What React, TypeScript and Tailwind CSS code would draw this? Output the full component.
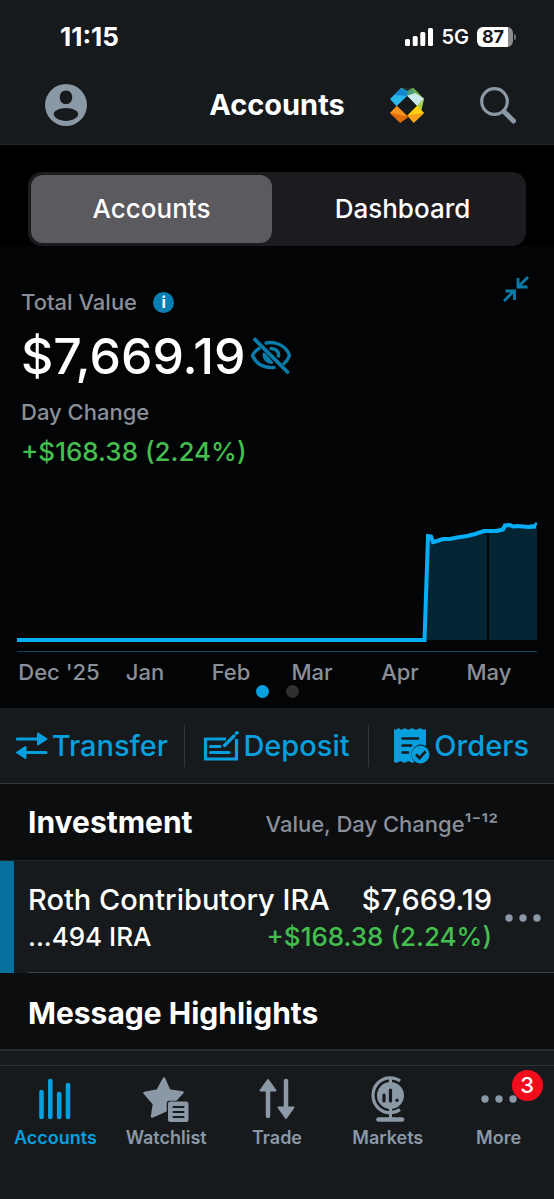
import { useState, type ReactNode } from "react";

const months = ["Dec '25", "Jan", "Feb", "Mar", "Apr", "May"];

function ProfileIcon() {
    return (
        <svg viewBox="0 0 42 42" className="size-[42px]" aria-hidden="true">
            <path
                fillRule="evenodd"
                fill="#8b98a6"
                d="M21 0a21 21 0 1 1 0 42a21 21 0 0 1 0-42zM21 6.500c-4 0-6.200 3-6.200 6.800s2.400 7 6.200 7s6.200-3.200 6.200-7s-2.200-6.800-6.200-6.800zM21 24c-6.600 0-12.300 3-12.300 6c0 3.300 5.700 7 12.300 7s12.300-3.700 12.300-7c0-3-5.700-6-12.300-6z"
            />
        </svg>
    );
}

function LogoIcon() {
    return (
        <svg viewBox="0 0 100 102" className="h-[35px] w-[34px]" aria-hidden="true">
            <path fill="#7db648" d="M30 0h40l30 31l-8 28l-14-8l-26-30z" />
            <path fill="#171a1d" d="M37 0h28l-14 9z" />
            <path fill="#2ab7ea" d="M0 32L32 0l24 20l-36 34z" />
            <path fill="#1489cf" d="M12 20L32 0l40 14l-20 9z" />
            <path fill="#4b9f73" d="M51 9l14-8l10 14l-23 8z" />
            <path fill="#c9e9ee" d="M50 22L74 14l26 17l-21 22z" />
            <path fill="#a3ce4f" d="M100 31l-8 36l-14-14z" />
            <path fill="#f7931e" d="M0 73L20 52l32 28l-22 22z" />
            <path fill="#e36c0a" d="M0 73L56 84L30 102z" />
            <path fill="#fdd20a" d="M50 80L80 50l20 23l-30 29z" />
            <path fill="#f9a01b" d="M50 80L100 73L70 102z" />
            <path fill="#171a1d" d="M50 23L79 52L50 81L21 52z" />
        </svg>
    );
}

function SearchIcon() {
    return (
        <svg viewBox="0 0 36 37" className="h-[37px] w-9" fill="none" stroke="#8b98a6" aria-hidden="true">
            <circle cx="14.500" cy="14.500" r="12.800" strokeWidth="3.200" />
            <path d="M24 24.500l9.500 9.500" strokeWidth="5" strokeLinecap="round" />
        </svg>
    );
}

function StatusIcons() {
    return (
        <div className="flex items-center gap-2">
            <svg viewBox="0 0 28 18" className="h-[18px] w-7" fill="#fff" aria-hidden="true">
                <rect x="0" y="11" width="5" height="7" rx="1.500" />
                <rect x="7.700" y="8" width="5" height="10" rx="1.500" />
                <rect x="15.300" y="4" width="5" height="14" rx="1.500" />
                <rect x="23" y="0" width="5" height="18" rx="1.500" />
            </svg>
            <span className="text-[20px] leading-5 font-semibold">5G</span>
            <div className="flex items-center gap-px">
                <div className="h-5 w-9 rounded-md bg-linear-to-r from-white from-86% to-[#8a8c8e] to-86% pr-1 text-center text-lg leading-5 font-bold text-[#171a1d]">
                    87
                </div>
                <div className="h-[6px] w-[2px] rounded-r-full bg-[#6c6e70]" />
            </div>
        </div>
    );
}

function HideIcon() {
    return (
        <svg viewBox="0 0 42 38" className="h-[38px] w-[42px]" fill="none" stroke="#0a7cab" strokeWidth="3.400" strokeLinecap="round" aria-hidden="true">
            <path d="M5 2.500L37.500 35" strokeWidth="3.800" />
            <path d="M9 11.500C5.500 13.500 3.500 16 2.500 18.500C6 26.500 13 31.300 24 30.500" />
            <path d="M16 6C27 4 36.500 9.500 39.500 18.500C38.500 21.500 36.500 24.500 34 26.500" />
            <path d="M14 17C14 22 17 25.500 21.500 25.500z" strokeWidth="3" fill="#0a7cab" strokeLinejoin="round" />
            <path d="M21 11.500C26 11.500 29 14.500 28.500 19" />
        </svg>
    );
}

function CollapseIcon() {
    return (
        <svg viewBox="0 0 26 26" className="size-[26px]" fill="none" stroke="#0a7cab" strokeWidth="2.800" aria-hidden="true">
            <path d="M25 1L15.500 10.500M15 2v9h9.500" />
            <path d="M1 25l9.500-9.500M2.500 15H11.500v9" />
        </svg>
    );
}

function Chart() {
    return (
        <svg viewBox="0 0 520 134" className="block w-full" fill="none" role="img" aria-label="Total value by month">
            <path d="M409 122L411 18L416 24L426 21L450 18L470 13L485 8L520 8V122z" fill="#032533" />
            <path d="M471 12V122" stroke="#020507" strokeWidth="2" />
            <path
                d="M0 122H407.500L411 18l3 0.500l2 5.500l4-1l6-2h7l7-1.500l10-1.500l8-2l9-3h13l6-1.500l2-4l5-0.500l3 1.500l5-0.500l5 0.500l6 0.500l7-0.500"
                stroke="#06aef5"
                strokeWidth="4"
            />
            <path d="M512 8h5l3-3" stroke="#06aef5" strokeWidth="3" />
            <path d="M0 133.500H520" stroke="#0f4766" />
        </svg>
    );
}

function TransferIcon() {
    return (
        <svg viewBox="0 0 32 28" className="h-7 w-8" fill="#079fdd" stroke="#079fdd" strokeLinejoin="round" strokeLinecap="round" aria-hidden="true">
            <path d="M1.500 7H24M30 20.500H8" strokeWidth="3.200" fill="none" />
            <path d="M22 1.500V12.500L30.500 7zM9.500 15V26L1 20.500z" strokeWidth="2" />
        </svg>
    );
}

function DepositIcon() {
    return (
        <svg viewBox="0 0 36 30" className="h-[30px] w-9" fill="none" stroke="#079fdd" strokeWidth="3.200" aria-hidden="true">
            <path d="M23 8H2.500V28H33.500V8" />
            <path d="M7.500 15.500H17M7.500 21.500H26" strokeLinecap="round" />
            <path d="M21.500 14.500L31 5" strokeLinecap="round" />
            <path d="M33.500 2.200l.5-.4" strokeWidth="3.600" strokeLinecap="round" />
        </svg>
    );
}

function OrdersIcon() {
    return (
        <svg viewBox="0 0 36 36" className="size-9" aria-hidden="true">
            <path
                fill="#079fdd"
                d="M0 1q1.500 1.600 3 0q1.500-1.600 3 0t3 0t3.500 0t3.500 0t4 0t4 0t4 0t4 0V18a9.500 9.500 0 0 0-14.500 8.500c0 3 1 5.500 3 7.500q-2 1.500-4 0t-4 0t-4 0t-4 0t-4.500 0z"
            />
            <path d="M8.500 10.500H24M8.500 17.500H17M8.500 24.500H14" stroke="#171a1d" strokeWidth="2.600" strokeLinecap="round" />
            <circle cx="26.500" cy="26.500" r="9" fill="#079fdd" />
            <path d="M22 26.500l3.500 3.500l6-6.500" fill="none" stroke="#171a1d" strokeWidth="2.600" />
        </svg>
    );
}

function AccountsIcon() {
    return (
        <svg viewBox="0 0 32 42" className="h-[42px] w-8" stroke="currentColor" strokeWidth="4.600" strokeLinecap="round" aria-hidden="true">
            <path d="M2.500 14V39M11.300 3V39M20.200 16V39M29 7V39" />
        </svg>
    );
}

function WatchlistIcon() {
    return (
        <svg viewBox="0 0 46 46" className="size-[46px]" aria-hidden="true">
            <path
                d="M21 2.500L26.200 14.500L39.500 16.500L33 23.500H26C24 23.500 22.500 25 22.500 27V34.500L9 40.500L11 28L1.500 17L14.500 14.500z"
                fill="currentColor"
                stroke="currentColor"
                strokeWidth="2.500"
                strokeLinejoin="round"
            />
            <rect x="25" y="25.500" width="20.500" height="20.500" rx="2.500" fill="currentColor" />
            <path d="M30.500 31h10M30.500 36h10M30.500 41h10" stroke="#171a1d" strokeWidth="2.200" strokeLinecap="round" />
        </svg>
    );
}

function TradeIcon() {
    return (
        <svg viewBox="0 0 38 42" className="h-[42px] w-[38px]" fill="currentColor" stroke="currentColor" strokeLinejoin="round" strokeLinecap="round" aria-hidden="true">
            <path d="M10 12V38M28 3V30" strokeWidth="4.500" />
            <path d="M10 2L17.500 12.500H2.500zM28 40L20.500 29.500H35.500z" strokeWidth="2" />
        </svg>
    );
}

function MarketsIcon() {
    return (
        <svg viewBox="0 0 34 46" className="h-[46px] w-[34px]" fill="none" stroke="currentColor" aria-hidden="true">
            <path d="M29 5C26 2.500 23 1.800 19 1.800C9.500 1.800 2 9.500 2 19.300s7.500 17.400 17 17.400c4 0 7-1 10-3" strokeWidth="3.200" />
            <circle cx="19.500" cy="19.500" r="13.500" fill="currentColor" stroke="none" />
            <path d="M19.500 1V8M19.500 31V42" strokeWidth="3" />
            <path d="M7.500 43.500H31" strokeWidth="4.600" strokeLinecap="round" />
            <path d="M13 19V25M19.500 14V25M26 24V24.500" stroke="#171a1d" strokeWidth="3.200" strokeLinecap="round" />
        </svg>
    );
}

function Dots() {
    return (
        <svg viewBox="0 0 36 8" className="h-2 w-9" fill="currentColor" aria-hidden="true">
            <circle cx="4" cy="4" r="3.700" />
            <circle cx="18" cy="4" r="3.700" />
            <circle cx="32" cy="4" r="3.700" />
        </svg>
    );
}

interface Tab {
    name: string;
    icon: ReactNode;
    badge?: number;
}

const tabs: Tab[] = [
    { name: "Accounts", icon: <AccountsIcon /> },
    { name: "Watchlist", icon: <WatchlistIcon /> },
    { name: "Trade", icon: <TradeIcon /> },
    { name: "Markets", icon: <MarketsIcon /> },
    { name: "More", icon: <Dots />, badge: 3 },
];

export default function App() {
    const [view, setView] = useState("Accounts");
    const [tab, setTab] = useState("Accounts");

    return (
        <div className="flex min-h-screen flex-col bg-[#0b0d0f] font-['Inter',sans-serif] text-white">
            <header className="border-b border-[#1f2225] bg-[#171a1d]">
                <div className="flex items-center justify-between pt-[23px] pr-[38px] pl-[60px]">
                    <span className="text-[26px] leading-7 font-bold">11:15</span>
                    <StatusIcons />
                </div>
                <div className="grid grid-cols-[1fr_auto_1fr] items-center px-[38px] pt-[33px] pb-[18px]">
                    <button aria-label="Profile" className="ml-[7px] justify-self-start"><ProfileIcon /></button>
                    <h1 className="text-[29px] leading-9 font-bold">Accounts</h1>
                    <div className="flex items-center justify-between pl-[45px]">
                        <button aria-label="Assistant"><LogoIcon /></button>
                        <button aria-label="Search"><SearchIcon /></button>
                    </div>
                </div>
            </header>

            <div className="bg-black px-7 pt-[27px]">
                <div className="grid grid-cols-2 gap-[10px] rounded-[14px] bg-[#1c1b1f] p-[3px]">
                    {["Accounts", "Dashboard"].map((name) => (
                        <button
                            key={name}
                            onClick={() => setView(name)}
                            className={`rounded-xl py-5 text-[26px] leading-7 font-medium ${view === name ? "bg-[#5b5a5f]" : ""}`}
                        >
                            {name}
                        </button>
                    ))}
                </div>
            </div>

            {/* Portfolio summary */}
            <section className="bg-[#030406]">
                <div className="flex items-start justify-between pt-[30px] pr-[25px] pl-[21px]">
                    <div className="pt-3">
                        <div className="flex items-center gap-4 text-[22px] leading-7 font-medium text-[#8a8f98]">
                            Total Value
                            <button aria-label="About total value" className="size-[21px] rounded-full bg-[#087fb2] text-base leading-5 font-bold text-white">i</button>
                        </div>
                        <div className="flex items-center gap-1 pt-3">
                            <span className="text-[50px] leading-[56px] font-medium">$7,669.19</span>
                            <button aria-label="Hide values"><HideIcon /></button>
                        </div>
                        <p className="pt-3.5 text-[22px] leading-7 font-medium text-[#8a8f98]">Day Change</p>
                        <p className="pt-3 text-[26px] leading-7 font-medium text-[#43bf4d]">+$168.38 (2.24%)</p>
                    </div>
                    <button aria-label="Collapse"><CollapseIcon /></button>
                </div>
                <div className="px-[17px] pt-[52px]">
                    <Chart />
                    <div className="grid grid-cols-[84fr_88fr_84fr_78fr_98fr_80fr_8fr] pt-2 text-center text-[22px] leading-6 font-medium whitespace-nowrap text-[#8a8f98]">
                        {months.map((month) => (
                            <span key={month}>{month}</span>
                        ))}
                    </div>
                </div>
                <div className="flex justify-center gap-[17px] pt-px pb-[10px]">
                    <span className="size-[13px] rounded-full bg-[#079fdd]" />
                    <span className="size-[13px] rounded-full bg-[#303033]" />
                </div>
            </section>

            <div className="grid grid-cols-3 divide-x divide-[#34383d] border-b border-[#34383d] bg-[#171a1d] pt-[17px] pb-4 text-[29px] leading-[42px] font-medium text-[#079fdd]">
                <button className="flex h-[42px] items-center justify-center gap-1"><TransferIcon />Transfer</button>
                <button className="flex h-[42px] items-center justify-center gap-1"><DepositIcon />Deposit</button>
                <button className="flex h-[42px] items-center justify-center gap-1"><OrdersIcon />Orders</button>
            </div>

            <div className="flex items-center justify-between py-5 pr-14 pl-7">
                <h2 className="text-[30px] leading-9 font-bold">Investment</h2>
                <span className="pt-1 text-[22px] leading-8 font-medium text-[#8a8f98]">Value, Day Change¹⁻¹²</span>
            </div>

            <section className="flex border-t border-[#24272a] bg-[#171a1d]">
                <div className="w-[14px] bg-[#05709b]" />
                <div className="ml-[14px] flex flex-1 items-center border-b border-[#3a4147] pt-5 pb-[17px] font-medium">
                    <div className="flex-1 whitespace-nowrap">
                        <div className="flex justify-between text-[29px] leading-[38px]">
                            <span>Roth Contributory IRA</span>
                            <span>$7,669.19</span>
                        </div>
                        <div className="flex justify-between text-[26px] leading-9">
                            <span>...494 IRA</span>
                            <span className="text-[#43bf4d]">+$168.38 (2.24%)</span>
                        </div>
                    </div>
                    <button aria-label="Account options" className="px-[13px] text-[#8b98a6]"><Dots /></button>
                </div>
            </section>

            <h2 className="border-b-2 border-[#282c30] pt-[22px] pb-[18px] pl-7 text-[30px] leading-9 font-bold">Message Highlights</h2>

            <div className="h-3.5 bg-[#171a1d]" />
            <nav className="grid flex-1 grid-cols-5 items-start border-t border-[#30343a] bg-[#171a1d] pt-2 text-[#8b98a6]">
                {tabs.map(({ name, icon, badge }) => (
                    <button key={name} onClick={() => setTab(name)} className={`flex flex-col items-center ${tab === name ? "text-[#079fdd]" : ""}`}>
                        <span className="relative flex h-[50px] items-center">
                            {icon}
                            {badge && (
                                <span className="absolute -top-1 -right-[26px] size-[31px] rounded-full bg-[#f20d1c] text-[22px] leading-[31px] font-medium text-white">
                                    {badge}
                                </span>
                            )}
                        </span>
                        <span className="pt-0.5 text-lg leading-6 font-semibold">{name}</span>
                    </button>
                ))}
            </nav>
        </div>
    );
}
